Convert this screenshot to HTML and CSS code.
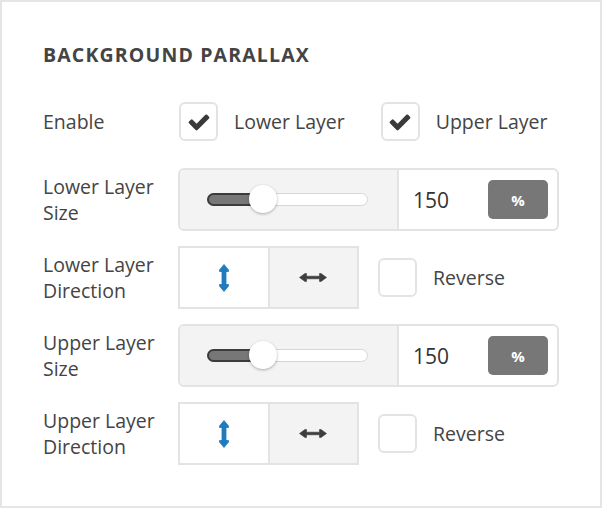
FILE: index.html
```html
<!DOCTYPE html>
<html>
<head>
<meta charset="utf-8">
<link rel="stylesheet" href="styles.css">
</head>
<body>
<div class="panel">
  <div class="title">BACKGROUND PARALLAX</div>

  <div class="row">
    <div class="label">Enable</div>
    <div class="controls">
      <label class="check-item">
        <span class="box checked"><svg viewBox="0 0 1792 1792" class="tick"><path d="M1671 566q0 40-28 68l-724 724-136 136q-28 28-68 28t-68-28l-136-136-362-362q-28-28-28-68t28-68l136-136q28-28 68-28t68 28l294 295 656-657q28-28 68-28t68 28l136 136q28 28 28 68z"/></svg></span>
        <span class="check-text">Lower Layer</span>
      </label>
      <label class="check-item">
        <span class="box checked"><svg viewBox="0 0 1792 1792" class="tick"><path d="M1671 566q0 40-28 68l-724 724-136 136q-28 28-68 28t-68-28l-136-136-362-362q-28-28-28-68t28-68l136-136q28-28 68-28t68 28l294 295 656-657q28-28 68-28t68 28l136 136q28 28 28 68z"/></svg></span>
        <span class="check-text">Upper Layer</span>
      </label>
    </div>
  </div>

  <div class="row">
    <div class="label">Lower Layer Size</div>
    <div class="slider-group">
      <div class="slider-cell">
        <div class="track"><div class="fill"></div><div class="thumb"></div></div>
      </div>
      <div class="value-cell">
        <span class="value">150</span>
        <span class="unit">%</span>
      </div>
    </div>
  </div>

  <div class="row">
    <div class="label">Lower Layer Direction</div>
    <div class="controls dir-row">
      <div class="dir-group">
        <div class="dir-btn active">
          <svg class="arrow-v" viewBox="0 0 10 28"><polygon points="5,0.5 9.5,6 9.5,7.5 7,7.5 7,20.5 9.5,20.5 9.5,22 5,27.5 0.5,22 0.5,20.5 3,20.5 3,7.5 0.5,7.5 0.5,6"/></svg>
        </div>
        <div class="dir-btn">
          <svg class="arrow-h" viewBox="0 0 28 9"><polygon points="0.5,4.5 6,0.5 7.5,0.5 7.5,3.2 20.5,3.2 20.5,0.5 22,0.5 27.5,4.5 22,8.5 20.5,8.5 20.5,5.8 7.5,5.8 7.5,8.5 6,8.5"/></svg>
        </div>
      </div>
      <label class="check-item">
        <span class="box"></span>
        <span class="check-text">Reverse</span>
      </label>
    </div>
  </div>

  <div class="row">
    <div class="label">Upper Layer Size</div>
    <div class="slider-group">
      <div class="slider-cell">
        <div class="track"><div class="fill"></div><div class="thumb"></div></div>
      </div>
      <div class="value-cell">
        <span class="value">150</span>
        <span class="unit">%</span>
      </div>
    </div>
  </div>

  <div class="row">
    <div class="label">Upper Layer Direction</div>
    <div class="controls dir-row">
      <div class="dir-group">
        <div class="dir-btn active">
          <svg class="arrow-v" viewBox="0 0 10 28"><polygon points="5,0.5 9.5,6 9.5,7.5 7,7.5 7,20.5 9.5,20.5 9.5,22 5,27.5 0.5,22 0.5,20.5 3,20.5 3,7.5 0.5,7.5 0.5,6"/></svg>
        </div>
        <div class="dir-btn">
          <svg class="arrow-h" viewBox="0 0 28 9"><polygon points="0.5,4.5 6,0.5 7.5,0.5 7.5,3.2 20.5,3.2 20.5,0.5 22,0.5 27.5,4.5 22,8.5 20.5,8.5 20.5,5.8 7.5,5.8 7.5,8.5 6,8.5"/></svg>
        </div>
      </div>
      <label class="check-item">
        <span class="box"></span>
        <span class="check-text">Reverse</span>
      </label>
    </div>
  </div>
</div>
</body>
</html>
```

FILE: styles.css
```css
html, body {
  margin: 0;
  padding: 0;
  background: #fff;
}

.panel {
  box-sizing: border-box;
  width: 602px;
  height: 508px;
  border: 2px solid #e5e5e5;
  padding: 40px 0 0 41px;
  font-family: "Open Sans", "Liberation Sans", sans-serif;
  color: #444;
  font-size: 19.5px;
}

.title {
  font-weight: 700;
  letter-spacing: 1.15px;
  line-height: 26px;
  height: 26px;
  margin-bottom: 22px;
  color: #444;
}

.row {
  display: grid;
  grid-template-columns: 135px auto;
  align-items: center;
  height: 63px;
  margin-bottom: 15px;
}

.label {
  line-height: 26px;
  width: 125px;
}

.controls {
  display: flex;
  align-items: center;
}

.check-item {
  display: flex;
  align-items: center;
  margin-left: 1px;
  margin-right: 35px;
}

.box {
  box-sizing: border-box;
  width: 39px;
  height: 39px;
  border: 2px solid #e3e3e3;
  border-radius: 6px;
  background: #fff;
  display: flex;
  align-items: center;
  justify-content: center;
}

.tick {
  width: 24px;
  height: 24px;
  fill: #3a3a3a;
}

.check-text {
  margin-left: 16px;
}

.slider-group {
  box-sizing: border-box;
  display: flex;
  width: 381px;
  height: 63px;
  border: 2px solid #e3e3e3;
  border-radius: 6px;
  overflow: hidden;
}

.slider-cell {
  box-sizing: border-box;
  width: 219px;
  background: #f3f3f3;
  border-right: 2px solid #e3e3e3;
  padding: 0 27px;
  display: flex;
  align-items: center;
}

.track {
  position: relative;
  box-sizing: border-box;
  width: 161px;
  height: 13px;
  border: 1.5px solid #d6d6d6;
  border-radius: 7px;
  background: #fff;
}

.fill {
  position: absolute;
  left: -1.5px;
  top: -1.5px;
  box-sizing: border-box;
  width: 60px;
  height: 13px;
  background: #777;
  border: 2px solid #3c3c3c;
  border-radius: 7px 0 0 7px;
}

.thumb {
  position: absolute;
  left: 41px;
  top: -9px;
  width: 28px;
  height: 28px;
  border-radius: 50%;
  background: #fff;
  box-shadow: 0 1px 3px rgba(0, 0, 0, 0.3);
}

.value-cell {
  flex: 1;
  display: flex;
  align-items: center;
  padding-left: 14px;
  padding-right: 9px;
}

.value {
  font-size: 21px;
  color: #333;
}

.unit {
  margin-left: auto;
  width: 60px;
  height: 39px;
  border-radius: 5px;
  background: #777;
  color: #fff;
  font-weight: 700;
  font-size: 15px;
  display: flex;
  align-items: center;
  justify-content: center;
}

.dir-group {
  box-sizing: border-box;
  display: flex;
  width: 181px;
  height: 63px;
  border: 2px solid #e3e3e3;
  margin-right: 19px;
}

.dir-btn {
  flex: 1;
  display: flex;
  align-items: center;
  justify-content: center;
  background: #f3f3f3;
}

.dir-btn.active {
  background: #fff;
  border-right: 2px solid #e3e3e3;
}

.arrow-v {
  width: 10px;
  height: 28px;
  fill: #1f7bbd;
  stroke: #1f7bbd;
  stroke-width: 0.8;
  stroke-linejoin: round;
}

.arrow-h {
  width: 28px;
  height: 9px;
  fill: #3d3d3d;
  stroke: #3d3d3d;
  stroke-width: 0.6;
  stroke-linejoin: round;
}

.dir-row .check-item {
  margin-left: 0;
}
```
